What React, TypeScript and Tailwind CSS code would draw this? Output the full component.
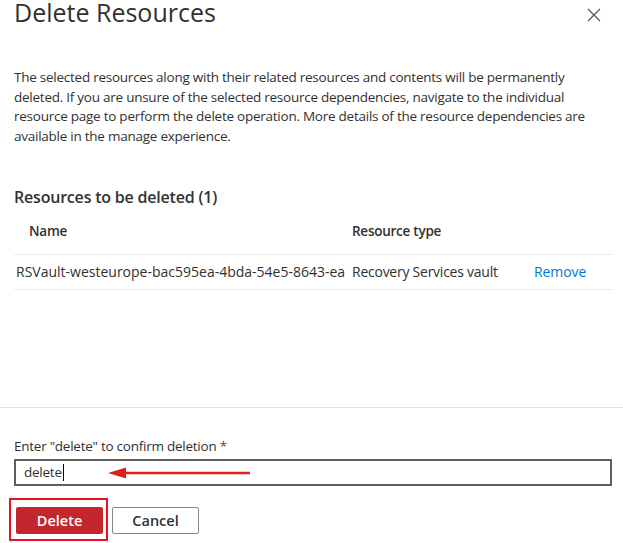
import React from "react";

export default function App() {
  const font = { fontFamily: '"Open Sans", "Noto Sans", sans-serif' };
  return (
    <div className="relative w-[623px] h-[543px] bg-white text-[#323130] overflow-hidden" style={font}>
      <div className="flex items-start justify-between pl-[14px] pr-[22px]">
        <h1 className="text-[25px] leading-[24px]">Delete Resources</h1>
        <svg className="mt-[8px]" width="14" height="14" viewBox="0 0 14 14">
          <path d="M1 1L13 13M13 1L1 13" stroke="#555" strokeWidth="1.2" />
        </svg>
      </div>
      <p className="mt-[44px] pl-[14px] pr-[30px] text-[13.5px] leading-[19.5px] tracking-[-0.25px]">
        The selected resources along with their related resources and contents will be permanently deleted. If you are unsure of the selected resource dependencies, navigate to the individual resource page to perform the delete operation. More details of the resource dependencies are available in the manage experience.
      </p>
      <h2 className="mt-[40px] pl-[14px] text-[16px] leading-[22px] font-semibold tracking-[-0.2px]">Resources to be deleted (1)</h2>
      <div className="ml-[14px] mr-[10px] mt-[5px] text-[13.5px] tracking-[-0.25px]">
        <div className="flex h-[42px] items-center pb-[4px] border-b border-[#edebe9] font-semibold">
          <div className="w-[338px] pl-[15px]">Name</div>
          <div>Resource type</div>
        </div>
        <div className="flex h-[35px] items-center pb-[2px] border-b border-[#edebe9]">
          <div className="w-[338px] pl-[2px] whitespace-nowrap text-[14px] tracking-[0px]">RSVault-westeurope-bac595ea-4bda-54e5-8643-ea</div>
          <div className="w-[182px] text-[14px] tracking-[-0.25px]">Recovery Services vault</div>
          <div className="text-[#0078d4] text-[14px] tracking-[-0.1px]">Remove</div>
        </div>
      </div>
      <div className="mt-[117px] border-t border-[#e1dfdd]" />
      <div className="pl-[14px] pr-[11px] pt-[29px]">
        <div className="text-[13.5px] leading-[18px] tracking-[-0.25px]">
          Enter "delete" to confirm deletion <span className="text-[#a4262c]">*</span>
        </div>
        <div className="relative mt-[4px] h-[27px] border-2 border-[#605e5c] flex items-center pl-[8px] text-[13.5px] tracking-[-0.25px]">
          <span>delete</span>
          <span className="inline-block w-[1px] h-[17px] bg-black ml-[1px]" />
          <svg className="absolute left-[92px] top-[5px]" width="146" height="14" viewBox="0 0 146 14">
            <path d="M14 7L142 7" stroke="#e02020" strokeWidth="2.5" />
            <path d="M0 7L18 1.5L18 12.5Z" fill="#e02020" />
          </svg>
        </div>
        <div className="relative mt-[21px] flex gap-[9px] pl-[2px]">
          <div className="absolute left-[-5px] top-[-9px] w-[99px] h-[43px] border-2 border-[#e81123]" />
          <button className="w-[87px] h-[27px] bg-[#c4262e] text-white text-[14.5px] font-semibold rounded-[2px]">Delete</button>
          <button className="w-[87px] h-[27px] bg-white border border-[#8a8886] text-[14.5px] font-semibold rounded-[2px]">Cancel</button>
        </div>
      </div>
    </div>
  );
}
